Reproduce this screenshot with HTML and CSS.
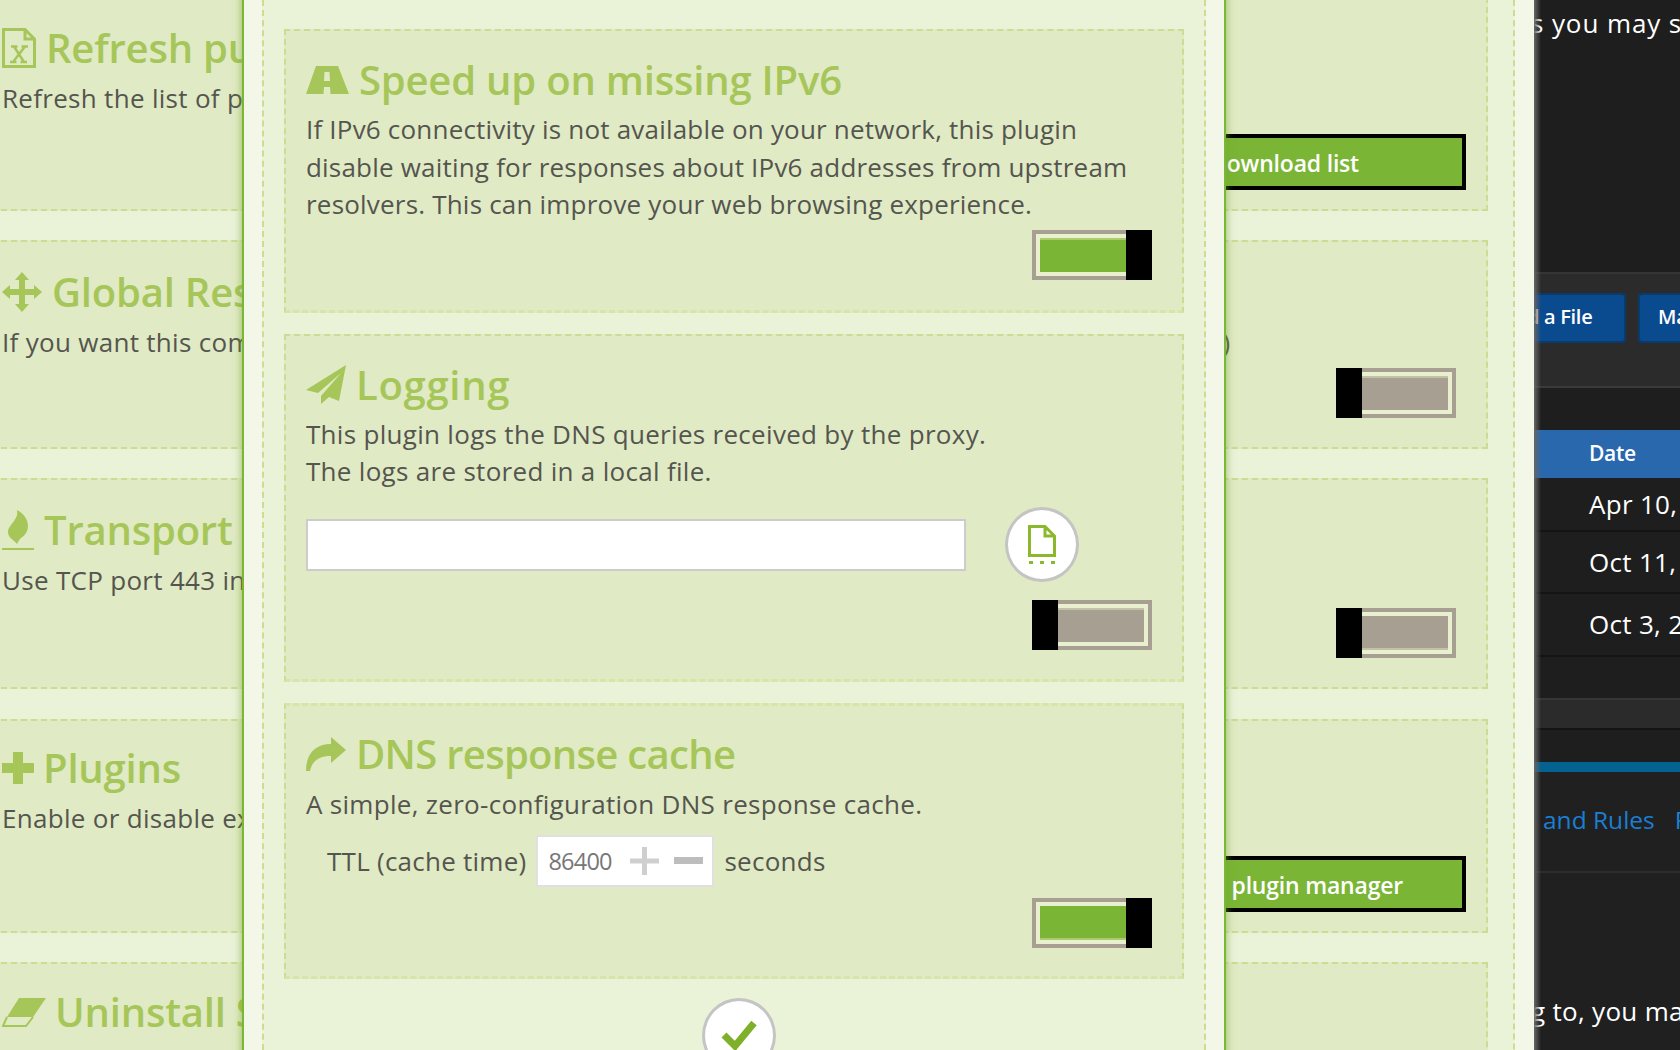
FILE: index.html
```html
<!DOCTYPE html>
<html lang="en">
<head>
    <meta charset="UTF-8">
    <title>Plugins</title>
    <link rel="stylesheet" href="styles.css">
</head>
<body>

<div class="back">
    <div class="back-inner">
        <div class="section sec-refresh">
            <h2 class="title">
                <svg class="icon ic-file" viewBox="0 0 34 40"><path d="M1.500 1.500H23L32.500 11V38.500H1.500ZM23 1.500V11H32.500" fill="none" stroke="#a6c659" stroke-width="3"/><path d="M12 18.500L22 34M23 18.500L11 34M9 18.500H15.500M19.500 18.500H26M8 34H14.500M18.500 34H25" fill="none" stroke="#a6c659" stroke-width="2.500"/></svg>
                Refresh public resolvers
            </h2>
            <p class="text">Refresh the list of public resolvers from the download list</p>
            <div class="btn-row"><button type="button" class="btn btn-refresh">Refresh the download list</button></div>
        </div>
        <div class="section sec-global">
            <h2 class="title">
                <svg class="icon ic-move" viewBox="0 0 40 40"><path d="M20 0L27 8H23V17H32V13L40 20L32 27V23H23V32H27L20 40L13 32H17V23H8V27L0 20L8 13V17H17V8H13Z" fill="#a6c659"/></svg>
                Global Resolver
            </h2>
            <p class="text">If you want this computer to act as a resolver for other devices on this network (not recommended)</p>
            <div class="switch-row"><span class="toggle off"><span class="fill"></span><span class="knob"></span></span></div>
        </div>
        <div class="section sec-transport">
            <h2 class="title">
                <svg class="icon ic-flame" viewBox="0 0 32 40"><path d="M15 0C21 3 26 9 26 16C26 22 22 26 19 28C17 30 16 32 15 34C12 30 6 28 6 22C6 15 17 10 15 0Z" fill="#a6c659"/><rect x="0" y="38" width="32" height="2" fill="#a6c659"/></svg>
                Transport Security
            </h2>
            <p class="text">Use TCP port 443 instead of the default port</p>
            <div class="switch-row"><span class="toggle off low"><span class="fill"></span><span class="knob"></span></span></div>
        </div>
        <div class="section sec-plugins">
            <h2 class="title">
                <svg class="icon ic-plus" viewBox="0 0 32 32"><path d="M11 0H21V11H32V21H21V32H11V21H0V11H11Z" fill="#a6c659"/></svg>
                Plugins
            </h2>
            <p class="text">Enable or disable extra plugins for the proxy</p>
            <div class="btn-row"><button type="button" class="btn btn-plugin">Open the plugin manager</button></div>
        </div>
        <div class="section sec-uninstall">
            <h2 class="title">
                <svg class="icon ic-eraser" viewBox="0 0 44 29"><path d="M17 0H44L31 19H5Z" fill="#a6c659"/><path d="M5 19L1 28H24L31 19" fill="none" stroke="#a6c659" stroke-width="2"/></svg>
                Uninstall Service
            </h2>
        </div>
    </div>

    <div class="modal">
        <div class="modal-inner">
            <div class="section sec-speed">
                <h2 class="title">
                    <svg class="icon ic-road" viewBox="0 0 43 28"><path fill-rule="evenodd" d="M10 0H32L43 28H0ZM18.500 6L18 15H24L23.500 6ZM18 21L17.500 28H24.500L24 21Z" fill="#a6c659"/></svg>
                    Speed up on missing IPv6
                </h2>
                <p class="text">If IPv6 connectivity is not available on your network, this plugin<br>disable waiting for responses about IPv6 addresses from upstream<br>resolvers. This can improve your web browsing experience.</p>
                <div class="switch-row"><span class="toggle on"><span class="fill"></span><span class="knob"></span></span></div>
            </div>
            <div class="section sec-logging">
                <h2 class="title">
                    <svg class="icon ic-send" viewBox="0 0 40 39"><path d="M40 0L0 25L12 28L35 8L15 31V39L23 32L33 36Z" fill="#a6c659"/></svg>
                    Logging
                </h2>
                <p class="text">This plugin logs the DNS queries received by the proxy.<br>The logs are stored in a local file.</p>
                <div class="file-row">
                    <input class="path" type="text">
                    <button type="button" class="round">
                        <svg width="28" height="39" viewBox="0 0 28 39"><path d="M1.500 1.500H17L26.500 11V30.500H1.500ZM17 1.500V11H26.500" fill="none" stroke="#8cb82e" stroke-width="3"/><path d="M1 36h4v3H1zM12 36h4v3h-4zM23 36h4v3h-4z" fill="#8cb82e"/></svg>
                    </button>
                </div>
                <div class="switch-row"><span class="toggle off"><span class="fill"></span><span class="knob"></span></span></div>
            </div>
            <div class="section sec-cache">
                <h2 class="title">
                    <svg class="icon ic-share" viewBox="0 0 40 34"><path d="M40 13L25 0V7C9 7 0 17 0 34H4C6 24 13 19 25 19V26Z" fill="#a6c659"/></svg>
                    DNS response cache
                </h2>
                <p class="text">A simple, zero-configuration DNS response cache.</p>
                <div class="ttl-row">
                    <span>TTL (cache time)</span>
                    <span class="spinner">
                        <span class="num">86400</span>
                        <svg width="29" height="28" viewBox="0 0 29 28"><path d="M12 0h5v11.500h12v5H17V28h-5V16.500H0v-5h12z" fill="#cfcfcf"/></svg>
                        <svg width="29" height="7" viewBox="0 0 29 7"><rect width="29" height="7" fill="#bdbdbd"/></svg>
                    </span>
                    <span>seconds</span>
                </div>
                <div class="switch-row"><span class="toggle on low"><span class="fill"></span><span class="knob"></span></span></div>
            </div>
            <div class="confirm">
                <button type="button" class="round">
                    <svg width="38" height="30" viewBox="0 0 38 30"><path d="M4 15L15 26L34 3" fill="none" stroke="#7fb02a" stroke-width="7"/></svg>
                </button>
            </div>
        </div>
    </div>
</div>

<div class="dark">
    <div class="d-top"><p class="d-line d-line-wide">s you may see here</p></div>
    <div class="d-bar">
        <span class="d-btn d-btn-first">d a File</span>
        <span class="d-btn">Manage</span>
    </div>
    <div class="d-gap"></div>
    <div class="d-head">Date</div>
    <div class="d-row d-row-1">Apr 10, 2018</div>
    <div class="d-row d-row-2">Oct 11, 2017</div>
    <div class="d-row d-row-3">Oct 3, 2017</div>
    <div class="d-gap2"></div>
    <div class="d-strip"></div>
    <div class="d-gap3"></div>
    <div class="d-blue"></div>
    <div class="d-links"><a>and Rules</a><a>Privacy</a></div>
    <div class="d-foot"><p class="d-line">g to, you may want</p></div>
</div>

</body>
</html>
```

FILE: styles.css
```css
*{box-sizing:border-box}
html,body{
    height:100%;
    overflow:hidden;
}
body{
    margin:0;
    display:flex;
    background:#1e1e1e;
    font-family:"Open Sans",sans-serif;
    color:#55554f;
}
.back{
    position:relative;
    width:1534px;
    height:1050px;
    flex:none;
    overflow:hidden;
    background:#f3f7e8;
}
.back-inner{
    width:1553px;
    height:1200px;
    margin:-20px 0 0 -38px;
    padding:17px 25px 0 19px;
    background:#eaf2d8;
    border-right:2px dashed #cedb93;
}
.section{
    background:#e0eac4;
    border:2px dashed #cedb93;
    padding:24px 30px 28px 19px;
    margin-bottom:29px;
}
.title{
    margin:0;
    height:50px;
    line-height:50px;
    display:flex;
    align-items:center;
    gap:10px;
    white-space:nowrap;
    font-size:40px;
    font-weight:600;
    letter-spacing:-0.200px;
    color:#a6c659;
}
.icon{flex:none}
.text{
    margin:6px 0 0;
    font-size:26px;
    line-height:37.500px;
    letter-spacing:0.300px;
}
.switch-row{
    display:flex;
    justify-content:flex-end;
    margin-top:6px;
}
.toggle{
    position:relative;
    display:flex;
    width:120px;
    height:50px;
    border:4px solid #a69f92;
    background:#e8f0d0;
    padding:4px;
}
.fill{
    flex:1;
    background:#a69f92;
    box-shadow:inset 0 2px 0 #c2c3a6;
}
.knob{
    position:absolute;
    top:-4px;
    width:26px;
    height:50px;
    background:#000;
}
.toggle.off .knob{left:-4px}
.toggle.on .knob{right:-4px}
.toggle.off .fill{margin-left:18px}
.toggle.on .fill{
    margin-right:18px;
    background:#7ab536;
    box-shadow:inset 0 2px 0 #aeca6c;
}
.toggle.low .fill{box-shadow:inset 0 -2px 0 #c2c3a6}
.toggle.on.low .fill{box-shadow:inset 0 -2px 0 #aeca6c}

/* back page sections */
.back-inner .section{padding-top:25px}
.back-inner .text{
    white-space:nowrap;
    margin-top:7px;
}
.sec-refresh{height:214px}
.sec-refresh .title{margin-top:-1px;margin-bottom:1px}
.sec-global{height:209px}
.sec-transport{height:211px;margin-bottom:30px}
.sec-transport .switch-row{margin-top:8px}
.sec-plugins{height:214px}
.back-inner .sec-plugins{padding-top:22px}
.back-inner .sec-uninstall{padding-top:23px}
.ic-file{width:34px;height:40px}
.ic-move{width:40px;height:40px}
.ic-flame{width:32px;height:40px}
.ic-plus{width:32px;height:32px;margin-right:-1px}
.ic-eraser{width:44px;height:29px;margin-right:-1px}
.ic-road{width:43px;height:28px}
.ic-send{width:40px;height:39px}
.ic-share{width:40px;height:34px}
.btn-row{
    display:flex;
    justify-content:flex-end;
    margin-right:-10px;
    margin-top:16px;
}
.sec-plugins .btn-row{margin-top:18px}
.btn{
    height:56px;
    width:600px;
    padding-top:4px;
    border:4px solid #000;
    background:#7ab536;
    color:#fff;
    font-family:inherit;
    font-size:23px;
    font-weight:600;
    letter-spacing:-0.200px;
    text-align:right;
}
.btn-refresh{padding-right:103px}
.btn-plugin{padding-right:59px}

/* dialog on top of the page */
.modal{
    position:absolute;
    left:242px;
    top:-20px;
    width:984px;
    height:1100px;
    padding:0 18px;
    background:#f3f7e8;
    border:solid #7cb637;
    border-width:0 2px;
    box-shadow:0 0 8px rgba(110,165,40,.7);
}
.modal-inner{
    height:100%;
    padding:49px 20px 0;
    background:#eaf2d8;
    border:dashed #cedb93;
    border-width:0 2px;
}
.modal .section{
    padding-left:20px;
    padding-right:30px;
    margin-bottom:21px;
    border-bottom:3px dashed #d8e4a8;
}
.modal .sec-speed{padding-bottom:30px}
.sec-speed .text{letter-spacing:0.200px}
.modal .sec-logging{padding-bottom:29px}
.sec-logging .title{letter-spacing:0.700px}
.file-row{
    display:flex;
    align-items:center;
    gap:39px;
    margin-top:16.500px;
}
.path{
    width:660px;
    height:52px;
    border:2px solid #ccc;
    background:#fff;
}
.round{
    display:flex;
    align-items:center;
    justify-content:center;
    width:74px;
    height:75px;
    padding:0;
    border:3px solid #c4c4c4;
    border-radius:50%;
    background:#fff;
}
.sec-logging .switch-row{margin-top:18px}
.modal .sec-cache{
    padding-top:23px;
    border-top:3px dashed #d8e4a8;
    margin-bottom:19px;
}
.sec-cache .title{letter-spacing:-0.700px}
.sec-cache .text{margin-top:7px}
.ttl-row{
    display:flex;
    align-items:center;
    gap:10px;
    margin-top:11px;
    padding-left:21px;
    font-size:26px;
    letter-spacing:0.250px;
}
.spinner{
    display:flex;
    align-items:center;
    width:178px;
    height:52px;
    padding-left:10px;
    border:2px solid #e0e0e0;
    background:#fff;
}
.num{
    width:82px;
    font-size:23.500px;
    letter-spacing:-0.800px;
    color:#777;
}
.spinner svg:last-child{margin-left:15px}
.sec-cache .switch-row{margin-top:11px}
.confirm{
    display:flex;
    padding-left:418px;
}

/* the dark site at the right */
.dark{
    position:relative;
    flex:1;
    height:1050px;
    overflow:hidden;
    background:#1e1e1e;
    color:#fff;
    font-size:26px;
    white-space:nowrap;
    letter-spacing:0.300px;
}
.dark::before{
    content:"";
    position:absolute;
    left:0;
    top:0;
    width:7px;
    height:100%;
    background:linear-gradient(to right,#666,rgba(60,60,60,0));
}
.d-line{margin:0 0 0 -3px}
.d-line-wide{letter-spacing:0.900px}
.d-top{height:272px;padding-top:5px}
.d-bar{
    height:116px;
    display:flex;
    gap:12px;
    padding-top:19px;
    background:#2b2b2b;
    border-top:2px solid #353535;
    border-bottom:2px solid #3a3a3a;
}
.d-btn{
    flex:none;
    height:50px;
    padding:8px 18px;
    background:#0a4a8f;
    border:2px solid #0b3b6b;
    border-radius:4px;
    font-size:20px;
    font-weight:600;
    letter-spacing:-0.300px;
}
.d-btn-first{
    width:92px;
    padding-left:0;
    text-indent:-7px;
    overflow:hidden;
    border-left:0;
    border-radius:0 4px 4px 0;
}
.d-gap{height:42px}
.d-head{
    height:48px;
    line-height:46px;
    padding-left:55px;
    background:#2a68ae;
    font-size:21px;
    font-weight:600;
    letter-spacing:-0.300px;
}
.d-row{
    padding-left:55px;
    border-bottom:2px solid #141414;
}
.d-row-1{height:54px;line-height:52px}
.d-row-2{height:62px;line-height:61px}
.d-row-3{height:63px;line-height:60px}
.d-gap2{height:41px}
.d-strip{
    height:32px;
    background:#2b2b2b;
    border-top:2px solid #363636;
    border-bottom:2px solid #141414;
}
.d-gap3{height:32px}
.d-blue{height:10px;background:#03628f}
.d-links{
    height:101px;
    padding:31px 0 0 9px;
    background:#202020;
    border-bottom:2px solid #2d2d2d;
    color:#1a7fd4;
    font-size:24.500px;
    letter-spacing:0;
    display:flex;
    gap:20px;
}
.d-foot{
    height:200px;
    padding-top:120px;
    background:#202020;
}
```
